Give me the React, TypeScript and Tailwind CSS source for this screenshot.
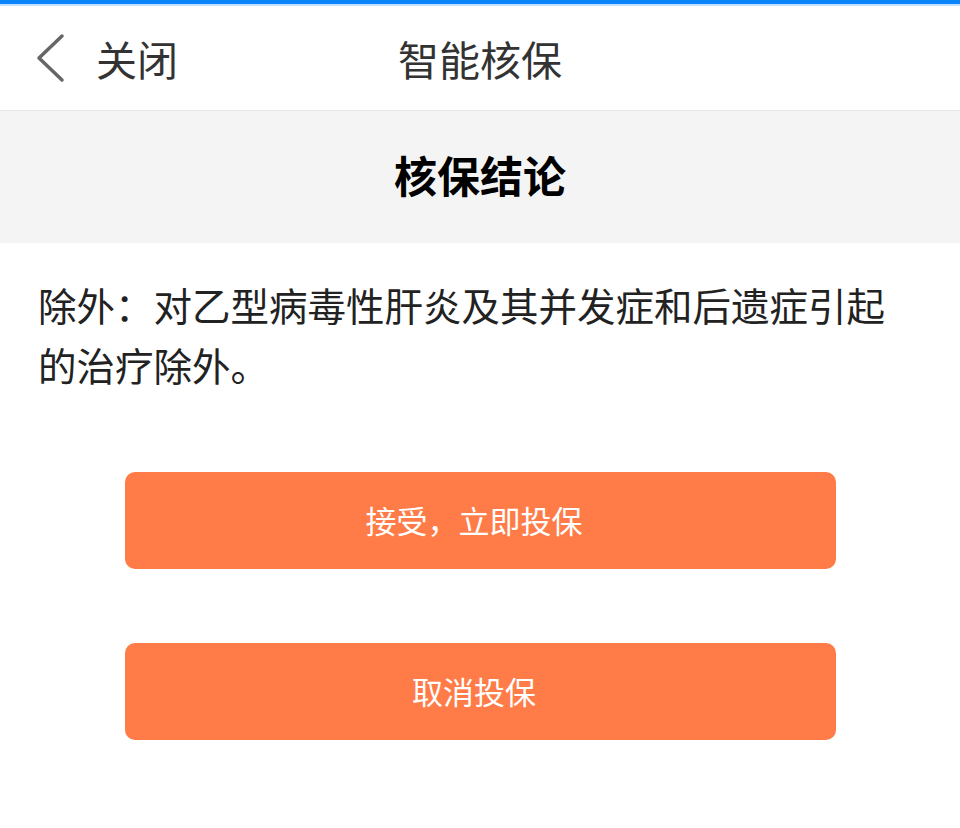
import React from "react";

const font = { fontFamily: '"Noto Sans CJK SC", "Noto Sans", sans-serif' };

export default function App() {
  return (
    <div className="w-[960px] h-[828px] bg-white flex flex-col" style={font}>
      <div className="h-[4px] bg-[#0a84fa]" />
      <div className="h-[2px] bg-[#bfe0ff]" />
      <div className="relative h-[105px] flex items-center border-b border-[#e6e6e6]">
        <div className="flex items-center pl-[34px] gap-[30px]">
          <svg width="32" height="50" viewBox="0 0 32 50" fill="none">
            <path d="M28 3 L5 25 L28 47" stroke="#666" strokeWidth="3.5" strokeLinecap="round" strokeLinejoin="round" />
          </svg>
          <span className="text-[41px] text-[#333] leading-none">关闭</span>
        </div>
        <div className="absolute inset-0 flex items-center justify-center pointer-events-none">
          <span className="text-[41px] text-[#333] leading-none">智能核保</span>
        </div>
      </div>
      <div className="h-[132px] bg-[#f4f4f4] flex items-center justify-center pb-[6px]">
        <span className="text-[43px] font-bold text-black leading-none">核保结论</span>
      </div>
      <div className="pl-[38px] pt-[31px] w-[910px] text-[38.5px] leading-[60px] text-[#222]">
        除外：对乙型病毒性肝炎及其并发症和后遗症引起的治疗除外。
      </div>
      <div className="flex flex-col items-center gap-[74px] mt-[78px]">
        <button className="w-[711px] h-[97px] rounded-[10px] bg-[#ff7b47] text-white text-[31px] flex items-center justify-center pr-[12px]">
          接受，立即投保
        </button>
        <button className="w-[711px] h-[97px] rounded-[10px] bg-[#ff7b47] text-white text-[31px] flex items-center justify-center pr-[12px]">
          取消投保
        </button>
      </div>
    </div>
  );
}
